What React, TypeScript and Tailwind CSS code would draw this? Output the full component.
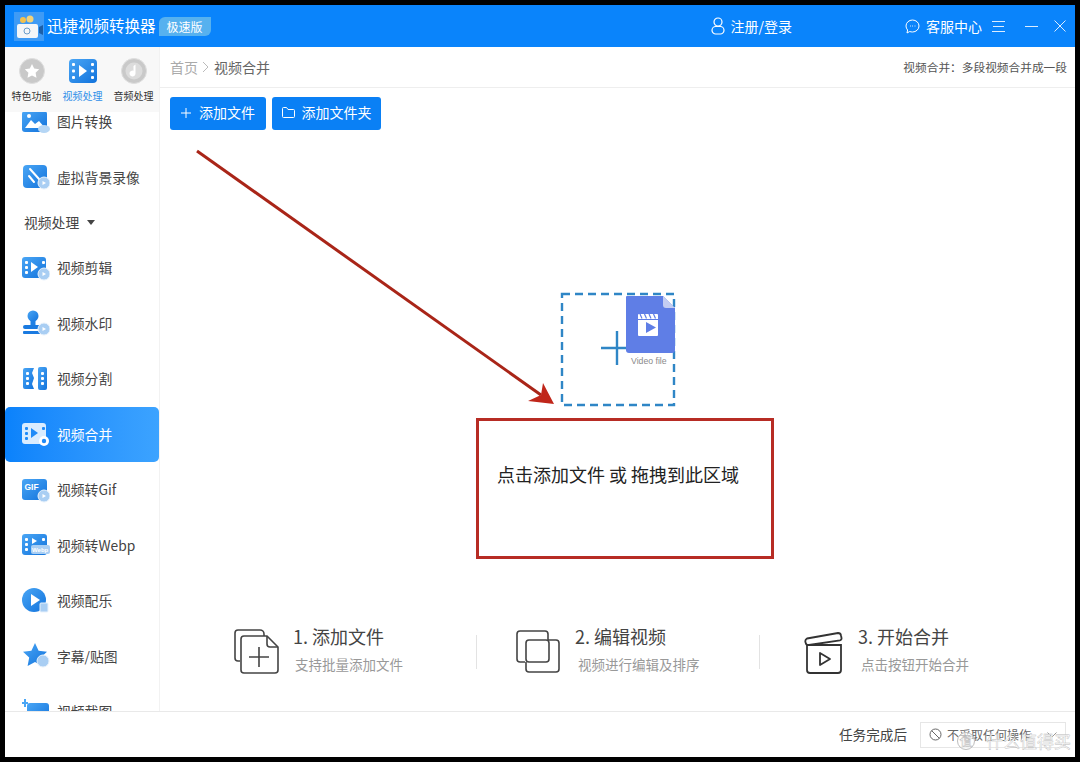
import React from "react";

const cjk = { fontFamily: '"Noto Sans CJK SC", "Noto Sans", sans-serif' };

const Blue = () => (
  <defs>
    <linearGradient id="blueFill" x1="0" y1="0" x2="1" y2="1">
      <stop offset="0" stopColor="#4aa6f5" />
      <stop offset="1" stopColor="#1273dc" />
    </linearGradient>
  </defs>
);

const Badge = () => <circle cx="22" cy="20" r="6" fill="#a9cef3" stroke="#e8f2fc" strokeWidth="1" />;

const Holes = ({ fill = "#fff" }: { fill?: string }) => (
  <g fill={fill}>
    <rect x="3" y="7" width="3" height="3" rx="1" />
    <rect x="3" y="12" width="3" height="3" rx="1" />
    <rect x="3" y="17" width="3" height="3" rx="1" />
    <rect x="20" y="7" width="3" height="3" rx="1" />
  </g>
);

const PhotoIcon = () => (
  <svg width="28" height="28" viewBox="0 0 28 28">
    <Blue />
    <rect x="0" y="3" width="25" height="21" rx="3" fill="url(#blueFill)" />
    <path d="M3 20l6-8 4 4 4-3 6 7z" fill="#fff" />
    <circle cx="7" cy="8" r="2" fill="#fff" />
    <ellipse cx="22" cy="21" rx="6" ry="4" fill="#b5d6f5" />
  </svg>
);

const WandIcon = () => (
  <svg width="28" height="28" viewBox="0 0 28 28">
    <Blue />
    <rect x="1" y="2" width="24" height="23" rx="4" fill="url(#blueFill)" />
    <path d="M8 6l9 10M7 13l5 6" stroke="#fff" strokeWidth="2" strokeLinecap="round" />
    <Badge />
    <path d="M20.5 18l3.5 2-3.5 2z" fill="#fff" />
  </svg>
);

const FilmIcon = () => (
  <svg width="28" height="28" viewBox="0 0 28 28">
    <Blue />
    <rect x="0" y="3" width="24" height="21" rx="3" fill="url(#blueFill)" />
    <Holes />
    <path d="M9 8l7 5-7 5z" fill="#fff" />
    <Badge />
    <path d="M20.5 18l3.5 2-3.5 2z" fill="#fff" />
  </svg>
);

const StampIcon = () => (
  <svg width="28" height="28" viewBox="0 0 28 28">
    <Blue />
    <circle cx="11" cy="7" r="5.5" fill="url(#blueFill)" />
    <rect x="8.5" y="11" width="5" height="6" fill="#1f80e4" />
    <rect x="1" y="16" width="20" height="4" rx="2" fill="#1a7ae0" />
    <rect x="1" y="22" width="20" height="3" rx="1" fill="#1a7ae0" />
    <Badge />
    <path d="M20.5 18l3.5 2-3.5 2z" fill="#fff" />
  </svg>
);

const SplitIcon = () => (
  <svg width="28" height="28" viewBox="0 0 28 28">
    <Blue />
    <path d="M1 5a2 2 0 012-2h9l-2 5 2 5-2 6 2 5H3a2 2 0 01-2-2z" fill="url(#blueFill)" />
    <rect x="16" y="2" width="9" height="23" rx="2" fill="url(#blueFill)" />
    <g fill="#fff">
      <rect x="4" y="7" width="3" height="3" rx="1" />
      <rect x="4" y="12" width="3" height="3" rx="1" />
      <rect x="4" y="17" width="3" height="3" rx="1" />
      <rect x="19" y="7" width="3" height="3" rx="1" />
      <rect x="19" y="12" width="3" height="3" rx="1" />
      <rect x="19" y="17" width="3" height="3" rx="1" />
    </g>
  </svg>
);

const MergeIcon = () => (
  <svg width="28" height="28" viewBox="0 0 28 28">
    <rect x="0" y="3" width="24" height="21" rx="3" fill="#d9ecff" />
    <Holes fill="#1f8bf8" />
    <path d="M9 8l7 5-7 5z" fill="#1f8bf8" />
    <circle cx="22" cy="21" r="5" fill="#fff" />
    <circle cx="22" cy="21" r="2.2" fill="#1f8bf8" />
  </svg>
);

const GifIcon = () => (
  <svg width="28" height="28" viewBox="0 0 28 28">
    <Blue />
    <rect x="0" y="3" width="25" height="21" rx="3" fill="url(#blueFill)" />
    <text x="2.5" y="13.5" fontSize="8.5" fontWeight="700" fill="#fff" fontFamily="Liberation Sans, sans-serif">GIF</text>
    <Badge />
    <path d="M20.5 18l3.5 2-3.5 2z" fill="#fff" />
  </svg>
);

const WebpIcon = () => (
  <svg width="28" height="28" viewBox="0 0 28 28">
    <Blue />
    <rect x="0" y="3" width="25" height="21" rx="3" fill="url(#blueFill)" />
    <Holes />
    <rect x="9" y="14" width="19" height="9" rx="2" fill="#a9cef3" />
    <text x="10" y="21" fontSize="6" fontWeight="700" fill="#fff" fontFamily="Liberation Sans, sans-serif">Webp</text>
    <path d="M10 7l5 3-5 3z" fill="#fff" />
  </svg>
);

const MusicIcon = () => (
  <svg width="28" height="28" viewBox="0 0 28 28">
    <Blue />
    <circle cx="12" cy="13" r="12" fill="url(#blueFill)" />
    <path d="M9 7l9 6-9 6z" fill="#fff" />
    <rect x="18" y="16" width="8" height="9" rx="1" fill="#a9cef3" stroke="#e8f2fc" />
  </svg>
);

const StarIcon = () => (
  <svg width="28" height="28" viewBox="0 0 28 28">
    <Blue />
    <path d="M13 1l3.6 7.8 8.4 1-6.2 5.8 1.6 8.4L13 20l-7.4 4 1.6-8.4L1 9.8l8.4-1z" fill="url(#blueFill)" />
    <circle cx="21" cy="19" r="6" fill="#a9cef3" stroke="#e8f2fc" />
  </svg>
);

const ShotIcon = () => (
  <svg width="28" height="28" viewBox="0 0 28 28">
    <Blue />
    <rect x="5" y="5" width="22" height="20" rx="3" fill="url(#blueFill)" />
    <path d="M0 5h6M3 1v8" stroke="#4aa6f5" strokeWidth="2" />
  </svg>
);

const TabIcon = ({ kind }: { kind: "star" | "film" | "note" }) => {
  if (kind === "film") {
    return (
      <svg width="30" height="26" viewBox="0 0 30 26">
        <Blue />
        <rect x="1" y="1" width="28" height="24" rx="4" fill="url(#blueFill)" />
        <g fill="#fff">
          <rect x="4" y="5" width="3" height="3" rx="1" />
          <rect x="4" y="11.5" width="3" height="3" rx="1" />
          <rect x="4" y="18" width="3" height="3" rx="1" />
          <rect x="23" y="5" width="3" height="3" rx="1" />
          <rect x="23" y="11.5" width="3" height="3" rx="1" />
          <rect x="23" y="18" width="3" height="3" rx="1" />
          <path d="M11 7l8 6-8 6z" />
        </g>
      </svg>
    );
  }
  return (
    <svg width="30" height="26" viewBox="0 0 30 26">
      <circle cx="15" cy="13" r="12.5" fill="#c9c9c9" stroke="#dedede" strokeWidth="1" />
      {kind === "star" ? (
        <path d="M15 6l2.2 4.6 5 .7-3.6 3.5.9 5L15 17.4l-4.5 2.4.9-5-3.6-3.5 5-.7z" fill="#fff" />
      ) : (
        <g>
          <circle cx="15" cy="13" r="8.5" fill="#dcdcdc" />
          <path d="M16.5 6.5v9a3 3 0 11-2-2.8V8z" fill="#fff" />
        </g>
      )}
    </svg>
  );
};

const Logo = () => (
  <svg width="30" height="29" viewBox="0 0 30 29">
    <rect x="0" y="0" width="30" height="29" fill="#3f9bf5" />
    <rect x="3" y="12" width="21" height="14" rx="2" fill="#f4f6f8" />
    <circle cx="9" cy="8" r="3" fill="#f2c14e" />
    <circle cx="16" cy="7" r="3.5" fill="#f2d27a" />
    <circle cx="13" cy="19" r="3" fill="none" stroke="#6a9cc9" strokeWidth="1" />
    <path d="M25 15l4-2v10l-4-2z" fill="#1c5fa8" />
  </svg>
);

const items: { label: string; icon: React.ReactNode; active?: boolean }[] = [
  { label: "视频剪辑", icon: <FilmIcon /> },
  { label: "视频水印", icon: <StampIcon /> },
  { label: "视频分割", icon: <SplitIcon /> },
  { label: "视频合并", icon: <MergeIcon />, active: true },
  { label: "视频转Gif", icon: <GifIcon /> },
  { label: "视频转Webp", icon: <WebpIcon /> },
  { label: "视频配乐", icon: <MusicIcon /> },
  { label: "字幕/贴图", icon: <StarIcon /> },
  { label: "视频截图", icon: <ShotIcon /> },
];

const NavItem = ({ label, icon, active }: { label: string; icon: React.ReactNode; active?: boolean }) => (
  <div className={active ? "h-[55.5px] flex items-center gap-[7px] pl-[17px] rounded-[5px] bg-gradient-to-r from-[#0a82fb] to-[#3ca3ff] text-white text-[13.8px]" : "h-[55.5px] flex items-center gap-[7px] pl-[17px] text-[#444] text-[13.8px]"}>
    {icon}
    <span>{label}</span>
  </div>
);

const Tab = ({ kind, label, active }: { kind: "star" | "film" | "note"; label: string; active?: boolean }) => (
  <div className="w-[52px] flex flex-col items-center">
    <TabIcon kind={kind} />
    <span className={active ? "mt-[5px] text-[10px] leading-[14px] text-[#2f8fe8] whitespace-nowrap" : "mt-[5px] text-[10px] leading-[14px] text-[#333] whitespace-nowrap"}>{label}</span>
  </div>
);

const Step = ({ icon, title, sub, width, gap, subInset }: { icon: React.ReactNode; title: string; sub: string; width: string; gap: string; subInset: string }) => (
  <div className={width + " flex items-center shrink-0"}>
    <div className={gap + " shrink-0"}>{icon}</div>
    <div className="mb-[5px]">
      <div className="text-[18px] leading-[24px] text-[#444] whitespace-nowrap">{title}</div>
      <div className={subInset + " mt-[6px] text-[13.5px] leading-[20px] text-[#999] whitespace-nowrap"}>{sub}</div>
    </div>
  </div>
);

const StepAdd = () => (
  <svg width="46" height="47" viewBox="0 0 46 47" fill="none" stroke="#444" strokeWidth="1.6">
    <path d="M6 33H4a3 3 0 01-3-3V5a3 3 0 013-3h22a4 4 0 014 4v2" />
    <path d="M10 8h23l11 11v23a3 3 0 01-3 3H10a3 3 0 01-3-3V11a3 3 0 013-3z" />
    <path d="M33 8v8a3 3 0 003 3h8" />
    <path d="M25 19v20M15 29h20" />
  </svg>
);

const StepEdit = () => (
  <svg width="46" height="46" viewBox="0 0 46 46" fill="none" stroke="#444" strokeWidth="1.6">
    <path d="M10 33H5a3 3 0 01-3-3V5a3 3 0 013-3h25a3 3 0 013 3v6" />
    <rect x="11" y="11" width="23" height="22" rx="3" />
    <path d="M33 11h8a3 3 0 013 3v26a3 3 0 01-3 3H14a3 3 0 01-3-3v-7" />
  </svg>
);

const StepMerge = () => (
  <svg width="40" height="44" viewBox="0 0 40 44" fill="none" stroke="#333" strokeWidth="1.8">
    <path d="M3 15h34v25a3 3 0 01-3 3H6a3 3 0 01-3-3z" />
    <path d="M3 8.5L34 3a3 3 0 013 2.5l.5 2.5a2 2 0 01-1.6 2.4L5 15a3 3 0 01-3.4-2.4 3.4 3.4 0 011.4-4.1z" />
    <path d="M16 23l10 6-10 6z" strokeLinejoin="round" />
  </svg>
);

const DropArt = () => (
  <svg width="116" height="115" viewBox="0 0 116 115" className="block">
    <rect x="2" y="2" width="112" height="111" fill="none" stroke="#2f86c6" strokeWidth="2.4" strokeDasharray="8 5" />
    <path d="M66 5a1 1 0 011-1h36l12 12v42a3 3 0 01-3 3H69a3 3 0 01-3-3z" fill="#5f7ee6" />
    <path d="M103 4l12 12h-9a3 3 0 01-3-3z" fill="#c3cdf2" />
    <rect x="78" y="22" width="20" height="22" rx="1" fill="#fff" />
    <path d="M78 27.5h20" stroke="#5f7ee6" strokeWidth="1" />
    <path d="M80 22l2 4.5M84.5 22l2 4.5M89 22l2 4.5M93.5 22l2 4.5" stroke="#5f7ee6" strokeWidth="1.2" />
    <path d="M86 30l10 5.5-10 5.5z" fill="#5f7ee6" />
    <path d="M41 56h25M57 39v34" stroke="#2f86c6" strokeWidth="2.4" />
    <text x="71" y="72" fontSize="8.7" fill="#8a8a8a" fontFamily="Liberation Sans, sans-serif">Video file</text>
  </svg>
);

export default function App() {
  return (
    <div className="relative w-[1080px] h-[762px] bg-black p-[5px] overflow-hidden" style={cjk}>
      <div className="h-full flex flex-col bg-white">
        <header className="h-[42px] shrink-0 bg-[#0a84fb] flex items-center text-white pl-[9px] pr-[9px]">
          <Logo />
          <span className="ml-[3px] text-[15.5px] whitespace-nowrap">迅捷视频转换器</span>
          <span className="ml-[3px] w-[52px] h-[19px] rounded-tl-[6px] rounded-br-[6px] bg-[#56b1ef] text-[12px] leading-[19px] text-center">极速版</span>
          <svg className="ml-[500px]" width="14" height="18" viewBox="0 0 14 18" fill="none" stroke="#fff" strokeWidth="1.2">
            <circle cx="7" cy="5" r="4" />
            <rect x="1" y="9.5" width="12" height="7.5" rx="3.7" />
          </svg>
          <span className="ml-[6px] text-[14px] whitespace-nowrap">注册/登录</span>
          <svg className="ml-[113px]" width="15" height="15" viewBox="0 0 15 15" fill="none" stroke="#fff" strokeWidth="1">
            <path d="M7.5 1a6.5 6 0 016.5 6 6.5 6 0 01-6.5 6c-1 0-2-.2-2.8-.5L2 14l.6-3A6 6 0 011 7a6.5 6 0 016.5-6z" />
            <path d="M5 7h.8M7.2 7H8M9.6 7h.8" />
          </svg>
          <span className="ml-[6px] text-[14px] whitespace-nowrap">客服中心</span>
          <svg className="ml-[10px]" width="13" height="13" viewBox="0 0 13 13" stroke="#dcedff" strokeWidth="1">
            <path d="M0 1.5h13M1 6.5h11M0 11.5h13" />
          </svg>
          <svg className="ml-[20px]" width="13" height="13" viewBox="0 0 13 13" stroke="#dcedff" strokeWidth="1">
            <path d="M0 6.5h13" />
          </svg>
          <svg className="ml-[16px]" width="12" height="12" viewBox="0 0 12 12" stroke="#dcedff" strokeWidth="1">
            <path d="M.5.5l11 11M11.5.5l-11 11" />
          </svg>
        </header>

        <div className="flex-1 flex min-h-0">
          <aside className="w-[155px] shrink-0 flex flex-col overflow-hidden border-r border-[#f2f2f2]">
            <div className="h-[65px] shrink-0 bg-[#f8f8f8] flex items-start pt-[11px] pl-[1px] relative z-10">
              <Tab kind="star" label="特色功能" />
              <Tab kind="film" label="视频处理" active />
              <Tab kind="note" label="音频处理" />
            </div>
            <div className="-mt-[18px]">
              <NavItem label="图片转换" icon={<PhotoIcon />} />
              <NavItem label="虚拟背景录像" icon={<WandIcon />} />
              <div className="h-[35px] flex items-center pl-[19px] text-[13.8px] text-[#444]">
                视频处理
                <svg className="ml-[8px]" width="8" height="5" viewBox="0 0 8 5"><path d="M0 0h8L4 5z" fill="#444" /></svg>
              </div>
              {items.map((it) => (
                <NavItem key={it.label} {...it} />
              ))}
            </div>
          </aside>

          <main className="flex-1 flex flex-col min-w-0">
            <div className="h-[41px] shrink-0 border-b border-[#eeeeee] flex items-center justify-between pl-[10px] pr-[8px]">
              <div className="flex items-center text-[14px]">
                <span className="text-[#aaa]">首页</span>
                <svg className="mx-[4px]" width="8" height="12" viewBox="0 0 8 12" fill="none" stroke="#bbb" strokeWidth="1"><path d="M1 1l5 5-5 5" /></svg>
                <span className="text-[#666]">视频合并</span>
              </div>
              <span className="text-[11.7px] text-[#555]">视频合并：多段视频合并成一段</span>
            </div>

            <div className="flex gap-[6px] pl-[10px] pt-[9px]">
              <button className="w-[96px] h-[33px] pb-[2px] rounded-[3px] bg-[#0a80f5] text-white text-[14px] flex items-center justify-center gap-[8px]">
                <svg width="10" height="10" viewBox="0 0 10 10" stroke="#fff" strokeWidth="1"><path d="M5 0v10M0 5h10" /></svg>
                添加文件
              </button>
              <button className="w-[109px] h-[33px] pb-[2px] rounded-[3px] bg-[#0a80f5] text-white text-[14px] flex items-center justify-center gap-[7px]">
                <svg width="13" height="11" viewBox="0 0 13 11" fill="none" stroke="#fff" strokeWidth="1"><path d="M.5 1.5a1 1 0 011-1h3l1.5 2h5.5a1 1 0 011 1v6a1 1 0 01-1 1h-10a1 1 0 01-1-1z" /></svg>
                添加文件夹
              </button>
            </div>

            <div className="mt-[162px] pl-[400px]">
              <DropArt />
            </div>

            <div className="mt-[11px] ml-[316px] w-[298px] h-[141px] border-[3px] border-[#b72c24] pl-[18px] pt-[41px] text-[18px] leading-[24px] text-[#222] whitespace-nowrap">
              点击添加文件 或 拖拽到此区域
            </div>

            <div className="mt-[65px] pl-[74px] flex items-center">
              <Step icon={<StepAdd />} title="1. 添加文件" sub="支持批量添加文件" width="w-[242px]" gap="mr-[13px]" subInset="ml-[2px]" />
              <div className="w-px h-[34px] bg-[#e3e3e3] shrink-0" />
              <div className="w-[38px] shrink-0" />
              <Step icon={<StepEdit />} title="2. 编辑视频" sub="视频进行编辑及排序" width="w-[244px]" gap="mr-[14px]" subInset="ml-[3px]" />
              <div className="w-px h-[34px] bg-[#e3e3e3] shrink-0" />
              <div className="w-[44px] shrink-0" />
              <Step icon={<StepMerge />} title="3. 开始合并" sub="点击按钮开始合并" width="w-[230px]" gap="mr-[14px]" subInset="ml-[3px]" />
            </div>
          </main>
        </div>

        <footer className="h-[46px] shrink-0 border-t border-[#e9e9e9] flex items-center justify-end pr-[9px] text-[13.6px] text-[#444]">
          <span>任务完成后</span>
          <div className="ml-[13px] w-[146px] h-[26px] border border-[#e6e6e6] flex items-center pl-[8px] pr-[8px] text-[12px] text-[#666]">
            <svg width="13" height="13" viewBox="0 0 13 13" fill="none" stroke="#666" strokeWidth="1"><circle cx="6.5" cy="6.5" r="5.5" /><path d="M2.6 2.6l7.8 7.8" /></svg>
            <span className="ml-[5px] whitespace-nowrap">不采取任何操作</span>
            <svg className="ml-auto" width="10" height="6" viewBox="0 0 10 6" fill="none" stroke="#999" strokeWidth="1"><path d="M.5.5L5 5 9.5.5" /></svg>
          </div>
        </footer>
      </div>

      {/* annotation arrow and site watermark sit over the screenshot */}
      <svg className="absolute left-0 top-0 pointer-events-none" width="1080" height="762" viewBox="0 0 1080 762">
        <path d="M197 151L541 395" stroke="#a92518" strokeWidth="3" />
        <path d="M554 404L528 401L541 395L543 383z" fill="#c0261a" />
      </svg>
      <div className="absolute left-[957px] top-[731px] flex items-center gap-[11px] text-white/85 [-webkit-text-stroke:0.4px_#bbbbbb] text-[17px] leading-[20px] whitespace-nowrap">
        <span className="w-[18px] h-[18px] rounded-full border border-[#bdbdbd] bg-white/50 text-[12px] leading-[16px] text-center [-webkit-text-stroke:0.3px_#a8a8a8]">值</span>
        <span>什么值得买</span>
      </div>
    </div>
  );
}
